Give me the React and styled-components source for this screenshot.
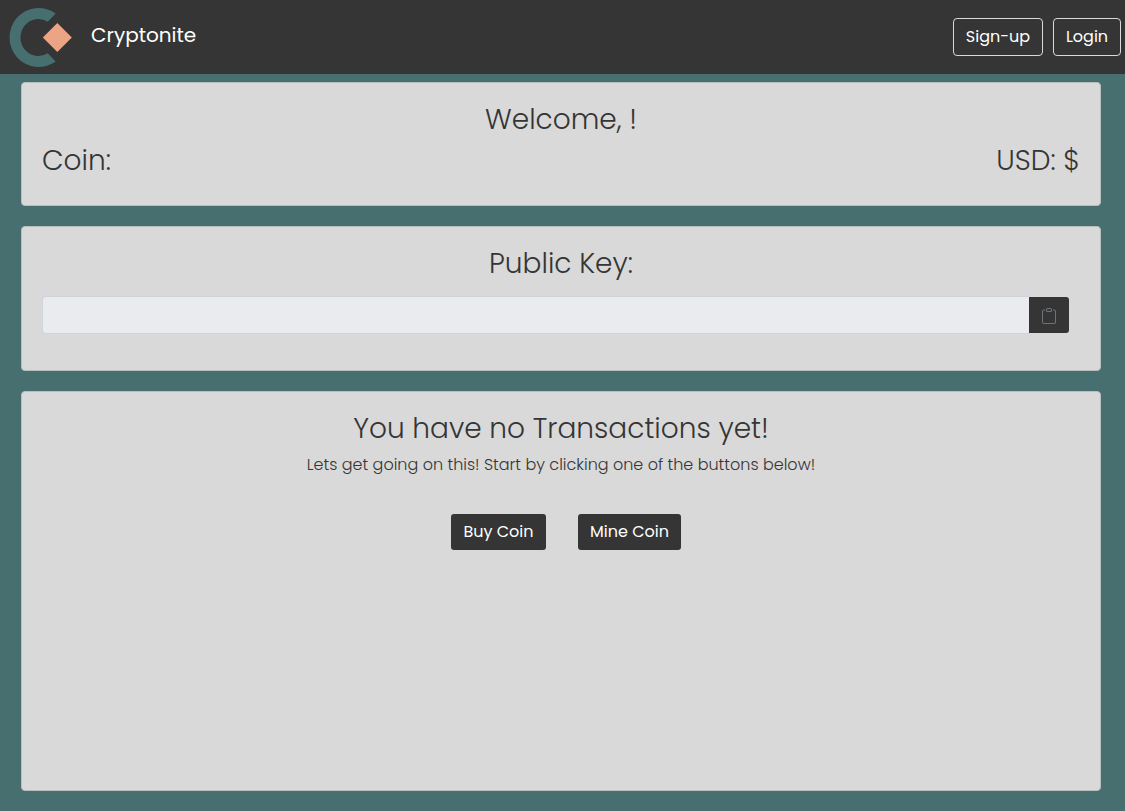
import React from "react";
import styled, { createGlobalStyle } from "styled-components";

const GlobalStyle = createGlobalStyle`
  *, *::before, *::after { box-sizing: border-box; }
  body {
    margin: 0;
    background: #486f70;
    color: #353535;
    font-family: Poppins, Inter, "Open Sans", sans-serif;
    font-size: 16px;
    font-weight: 300;
    line-height: 24px;
  }
`;

const Navbar = styled.header`
  display: flex;
  align-items: center;
  justify-content: space-between;
  height: 74px;
  padding: 0 4px 0 8px;
  background: #353535;
`;

const Brand = styled.a`
  display: flex;
  align-items: center;
  gap: 18px;
  color: #fff;
  font-size: 20px;
  font-weight: 400;
  line-height: 30px;
  text-decoration: none;
`;

const BrandName = styled.span`
  padding-bottom: 4px;
`;

const NavActions = styled.nav`
  display: flex;
  gap: 10px;
`;

const Button = styled.button`
  height: ${(p) => (p.$outline ? 38 : 36)}px;
  width: ${(p) => p.$width}px;
  padding: 0;
  border: ${(p) => (p.$outline ? "1px solid #d9d9d9" : "0")};
  border-radius: ${(p) => (p.$outline ? 4 : 3)}px;
  background: #353535;
  color: #fff;
  font: inherit;
  font-weight: 400;
  white-space: nowrap;
  cursor: pointer;
`;

const Main = styled.main`
  display: flex;
  flex-direction: column;
  gap: 20px;
  padding: 8px 24px 20px 21px;
`;

const Card = styled.section`
  min-height: ${(p) => p.$minHeight}px;
  padding: 20px;
  border: 1px solid #b9bfbf;
  border-radius: 4px;
  background: #d9d9d9;
  text-align: center;
`;

const Title = styled.h2`
  margin: 0 0 8px;
  font-size: 28px;
  font-weight: 300;
  line-height: 33px;
`;

const Balances = styled.div`
  display: flex;
  justify-content: space-between;
`;

const KeyGroup = styled.div`
  display: flex;
  align-items: center;
  margin: 16px 11px 0 0;
`;

const KeyInput = styled.input`
  flex: 1;
  min-width: 0;
  height: 38px;
  padding: 6px 12px;
  border: 1px solid #ced4da;
  border-right: 0;
  border-radius: 4px 0 0 4px;
  background: #eaebef;
  color: #353535;
  font: inherit;
`;

const CopyButton = styled.button`
  display: flex;
  align-items: center;
  justify-content: center;
  width: 40px;
  height: 36px;
  padding: 2px 0 0;
  border: 0;
  border-radius: 0 3px 3px 0;
  background: #353535;
  color: #6c757d;
  cursor: pointer;
`;

const Lead = styled.p`
  margin: 0;
  font-size: 16px;
`;

const Actions = styled.div`
  display: flex;
  justify-content: center;
  gap: 32px;
  margin-top: 37px;
  padding-left: 10px;
`;

function Logo() {
  return (
    <svg width="65" height="62" viewBox="8 6 65 62" aria-hidden="true">
      <path
        d="M55.700 13.400A29.300 29.500 0 1 0 55.700 61.600L47.700 53.200A17.800 18.500 0 1 1 47.700 21.800Z"
        fill="#486f70"
      />
      <path d="M57.300 23L71.800 37.500L57.300 52L42.800 37.500Z" fill="#eba584" />
    </svg>
  );
}

function ClipboardIcon() {
  return (
    <svg width="16" height="16" viewBox="0 0 16 16" fill="currentColor" aria-hidden="true">
      <path d="M4 1.5H3a2 2 0 0 0-2 2V14a2 2 0 0 0 2 2h10a2 2 0 0 0 2-2V3.500a2 2 0 0 0-2-2h-1v1h1a1 1 0 0 1 1 1V14a1 1 0 0 1-1 1H3a1 1 0 0 1-1-1V3.500a1 1 0 0 1 1-1h1v-1z" />
      <path d="M9.500 1a.5.5 0 0 1 .5.5v1a.5.5 0 0 1-.5.5h-3a.5.5 0 0 1-.5-.5v-1a.5.5 0 0 1 .5-.5h3zm-3-1A1.500 1.500 0 0 0 5 1.500v1A1.500 1.500 0 0 0 6.500 4h3A1.500 1.500 0 0 0 11 2.500v-1A1.500 1.500 0 0 0 9.500 0h-3z" />
    </svg>
  );
}

export default function App() {
  return (
    <>
      <GlobalStyle />
      <Navbar>
        <Brand href="#">
          <Logo />
          <BrandName>Cryptonite</BrandName>
        </Brand>
        <NavActions aria-label="Account">
          <Button type="button" $outline $width={90}>Sign-up</Button>
          <Button type="button" $outline $width={68}>Login</Button>
        </NavActions>
      </Navbar>
      <Main>
        <Card $minHeight={124}>
          <Title as="h1">Welcome, !</Title>
          <Balances>
            <Title>Coin:</Title>
            <Title>USD: $</Title>
          </Balances>
        </Card>
        <Card $minHeight={145}>
          <Title>
            <label htmlFor="public-key">Public Key:</label>
          </Title>
          <KeyGroup>
            <KeyInput id="public-key" type="text" readOnly />
            <CopyButton type="button" aria-label="Copy public key">
              <ClipboardIcon />
            </CopyButton>
          </KeyGroup>
        </Card>
        <Card $minHeight={400}>
          <Title>You have no Transactions yet!</Title>
          <Lead>Lets get going on this! Start by clicking one of the buttons below!</Lead>
          <Actions>
            <Button type="button" $width={95}>Buy Coin</Button>
            <Button type="button" $width={103}>Mine Coin</Button>
          </Actions>
        </Card>
      </Main>
    </>
  );
}
